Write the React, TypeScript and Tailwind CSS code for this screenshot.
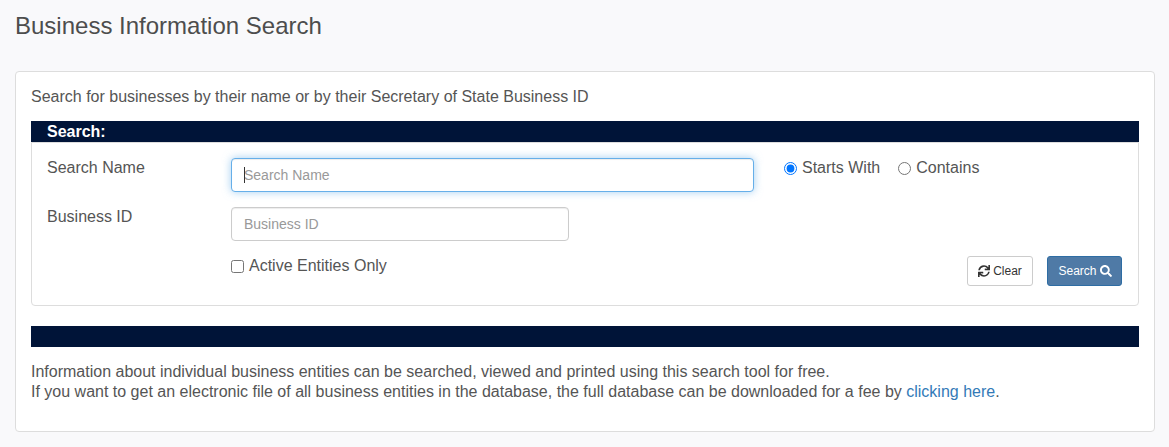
import { FaSearch, FaSync } from "react-icons/fa";

export default function App() {
  return (
    <div className="h-[447px] w-[1169px] overflow-hidden bg-[#f9f9fb] px-[15px] font-['Liberation_Sans',Arial,sans-serif] text-[16px] leading-[20px] text-[#555555]">
      <h1 className="pt-[12px] text-[24px] leading-[27px] font-normal text-[#4d4d4d]">Business Information Search</h1>
      <div className="mt-[32px] h-[361px] w-[1140px] rounded-[4px] border border-[#dddddd] bg-white px-[15px] pt-[15px]">
        <p className="h-[20px]">Search for businesses by their name or by their Secretary of State Business ID</p>
        <div className="mt-[14px] h-[21px] bg-[#001438] pl-[16px] text-[16px] leading-[22px] font-bold text-white">Search:</div>
        <div className="flex h-[164px] flex-col rounded-b-[4px] border border-[#dddddd] bg-white pl-[15px] pr-[16px] pt-[15px]">
          <div className="flex h-[34px]">
            <label className="w-[184px] leading-[20px]">Search Name</label>
            <div className="relative h-[34px] w-[523px]">
              <input readOnly placeholder="Search Name" className="h-[34px] w-full rounded-[4px] border border-[#66afe9] bg-white px-[12px] text-[14px] shadow-[inset_0_1px_1px_rgba(0,0,0,0.075),0_0_8px_rgba(102,175,233,0.6)] outline-none placeholder:text-[#999999]" />
              <span className="absolute left-[13px] top-[9px] h-[16px] w-px bg-[#333333]" />
            </div>
            <div className="ml-[30px] flex h-[20px] items-center">
              <input type="radio" name="mode" defaultChecked className="m-0 h-[13px] w-[13px]" />
              <span className="ml-[5px]">Starts With</span>
              <input type="radio" name="mode" className="m-0 ml-[18px] h-[13px] w-[13px]" />
              <span className="ml-[5px]">Contains</span>
            </div>
          </div>
          <div className="mt-[15px] flex h-[34px]">
            <label className="w-[184px] leading-[20px]">Business ID</label>
            <input readOnly placeholder="Business ID" className="h-[34px] w-[338px] rounded-[4px] border border-[#cccccc] bg-white px-[12px] text-[14px] shadow-[inset_0_1px_1px_rgba(0,0,0,0.075)] outline-none placeholder:text-[#999999]" />
          </div>
          <div className="flex items-start justify-between pt-[15px]">
            <label className="ml-[184px] flex h-[20px] items-center">
              <input type="checkbox" className="m-0 h-[13px] w-[13px]" />
              <span className="ml-[5px]">Active Entities Only</span>
            </label>
            <div className="flex gap-[14px]">
              <button className="flex h-[30px] w-[66px] items-center justify-center gap-[3px] rounded-[3px] border border-[#cccccc] bg-white text-[12px] leading-[18px] text-[#333333]">
                <FaSync className="h-[12px] w-[12px]" />
                Clear
              </button>
              <button className="flex h-[30px] w-[75px] items-center justify-center gap-[3px] rounded-[3px] border border-[#2e6da4] bg-[#4f7aa6] pl-[1px] text-[12px] leading-[18px] text-white">
                Search
                <FaSearch className="h-[12px] w-[12px]" />
              </button>
            </div>
          </div>
        </div>
        <div className="mt-[20px] h-[21px] bg-[#001438]" />
        <p className="mt-[15px]">
          Information about individual business entities can be searched, viewed and printed using this search tool for free.
          <br />
          If you want to get an electronic file of all business entities in the database, the full database can be downloaded for a fee by <a className="text-[#337ab7]">clicking here</a>.
        </p>
      </div>
    </div>
  );
}
